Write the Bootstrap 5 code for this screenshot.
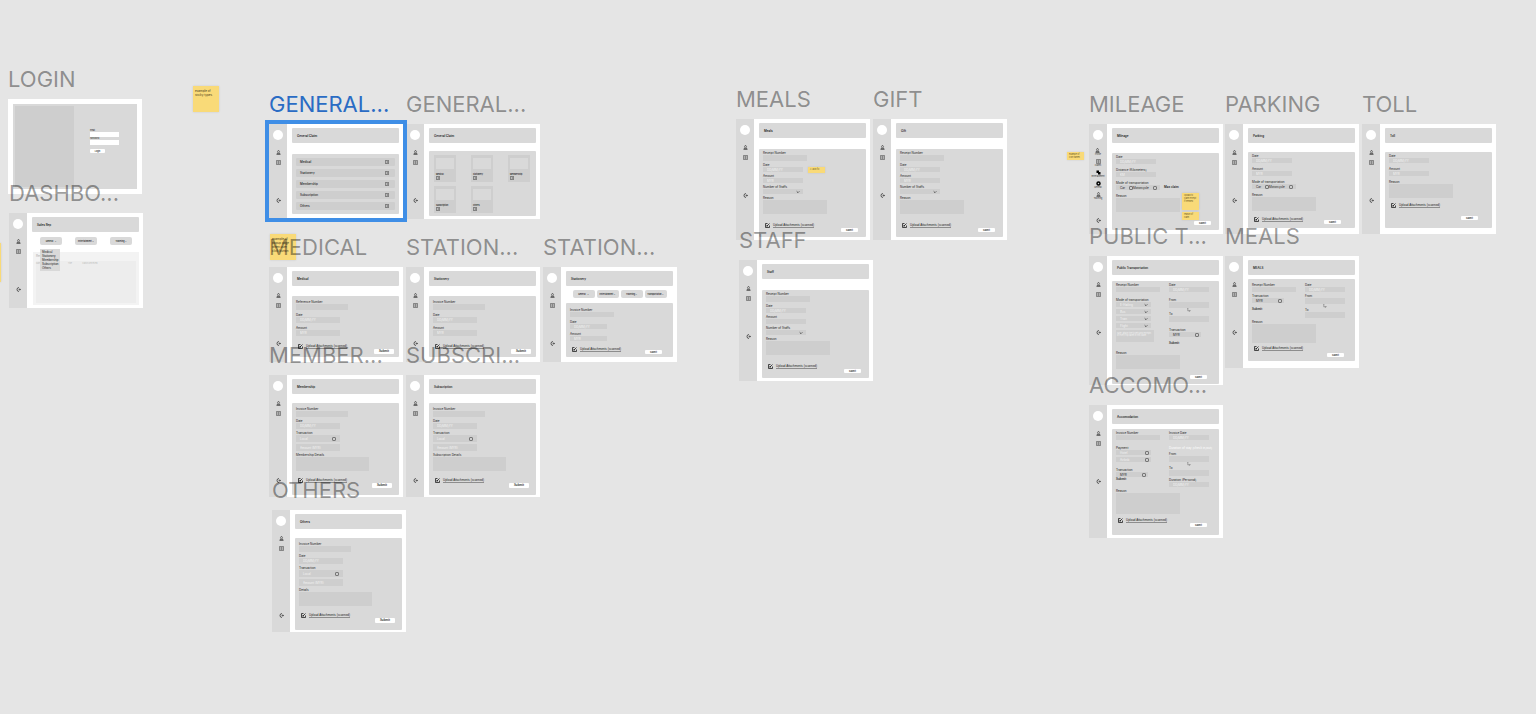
<!DOCTYPE html>
<html lang="en">
<head>
<meta charset="utf-8">
<meta name="viewport" content="width=device-width, initial-scale=1">
<title>Claims wireframes</title>
<link href="https://cdn.jsdelivr.net/npm/bootstrap@5.3.0/dist/css/bootstrap.min.css" rel="stylesheet">
<style>
  body { background: #e5e5e5; font-family: Inter, "Liberation Sans", sans-serif; color: #222; }
  .board { min-height: 100vh; font-size: 3px; line-height: 4px; }
  .artboard { width: 134px; left: var(--x); top: var(--y); }
  .board-name { height: 30px; margin: 0 0 5px; font-size: 22px; line-height: 30px; font-weight: 400; color: rgba(0,0,0,.4); white-space: nowrap; }
  .screen { background: #fff; min-height: var(--h, 95px); }
  .picked .board-name { color: #2a6cc4; }
  .picked .screen { outline: 4px solid #3f8ee6; }

  .side { width: 18px; background: #d9d9d9; padding-top: 6px; }
  .avatar { width: 10px; height: 10px; background: #fff; margin-bottom: 10px; }
  .side svg, .clip svg { width: 5px; height: 5px; display: block; }
  .side a { color: #333; }
  .side a + a { margin-top: 5px; }
  .side a.leave { margin-top: var(--leave, 33px); }
  .side-named .avatar { margin-bottom: 8px; }
  .side-named a { text-decoration: none; font-size: 2px; line-height: 3px; }
  .side-named a + a { margin-top: 3px; }
  .side-named a.leave { margin-top: 18px; }

  .pane { padding: 4px 4px var(--foot, 3px) 5px; min-width: 0; }
  .bar { height: 15px; padding-left: 5px; background: #d9d9d9; border-radius: 1px; font-size: 3px; line-height: 4px; font-weight: 600; margin: 0; }
  .sheet { background: #d9d9d9; border-radius: 1px; margin-top: var(--drop, 9px); padding: var(--top, 4px) 4px 0; }
  .stack { gap: var(--gap, 2px); }
  .gap-wide { gap: 6px; }
  .duo { gap: 9px; }
  .duo > div { width: 44px; }

  .fld { width: 44px; color: #222; }
  .fld input:not(.tick), .fld select, .fld textarea, .opts, .memo { border: 0; border-radius: 0; background-color: #cecece; color: #f2f2f2; font-size: 3px; line-height: 4px; padding: 0 4px; height: 5px; width: 100%; display: block; resize: none; outline: 0; }
  .fld input::placeholder { color: #f4f4f4; opacity: 1; }
  .fld select { appearance: none; background-image: url("data:image/svg+xml,%3Csvg xmlns='http://www.w3.org/2000/svg' viewBox='0 0 6 6'%3E%3Cpath d='M1 2l2 2 2-2' fill='none' stroke='%23222'/%3E%3C/svg%3E"); background-repeat: no-repeat; background-size: 4px 4px; background-position: right 3px center; }
  .fld input.h6px:not(.tick) { height: 6px; }
  .fld input.h7px:not(.tick), .opts.h7px { height: 7px; }
  .fld .area { height: 14px; }
  .w-52 { width: 52px; } .w-40 { width: 40px; } .w-37 { width: 37px; } .w-35 { width: 35px; }
  .w-64 { width: 64px; } .w-73 { width: 73px; } .w-32 { width: 32px; }
  .opts { width: 44px; color: #222; }
  .opts.w-32 { width: 32px; }
  .opts.pale { color: #f2f2f2; }
  .tick { appearance: none; flex: none; width: 4px; height: 4px; border: 1px solid #777; border-radius: 1px; margin: 0; display: block; }
  .opts.w-32, .opts.w-100 { padding-right: 2px; }
  .memo { width: 38px; height: 12px; padding: 2px 1px; font-size: 2px; line-height: 2px; }
  .strong { font-weight: 600; }
  .hop { width: 4px; height: 4px; margin-left: 18px; display: block; }

  .ending { height: var(--end, 11px); margin-top: auto; margin-bottom: var(--under, 5px); padding-right: var(--right, 4px); }
  .clip { gap: 3px; padding-left: 2px; height: 6px; color: #222; white-space: nowrap; text-decoration: none; font-family: "Liberation Sans", sans-serif; }
  .clip u { text-decoration-color: rgba(0,0,0,.35); }
  .send { border: 0; background: #fff; color: #222; font-weight: 600; font-size: 2px; line-height: 3px; width: 17px; height: 4px; padding: 0; border-radius: 1px; }
  .send-lg { width: 20px; height: 5px; font-size: 3px; }

  .row-link { height: 8px; background: #cecece; padding: 0 6px 0 4px; color: #222; text-decoration: none; font-weight: 500; border-radius: 1px; }
  .row-link svg, .tile svg { width: 4px; height: 4px; display: block; }
  .tiles { display: grid; grid-template-columns: repeat(3, 22px); justify-content: space-between; gap: 4px; padding: 0 2px 0 1px; }
  .tile { height: 27px; background: #cecece; padding: 3px 2px; font-size: 2px; line-height: 4px; color: #222; text-decoration: none; font-weight: 600; }
  .thumb { background: #d9d9d9; height: 11px; margin-bottom: 3px; }
  .pill { border: 0; width: 22px; height: 8px; background: #d9d9d9; border-radius: 2px; font-size: 2px; line-height: 3px; font-weight: 600; color: #222; padding: 0 2px; white-space: nowrap; }
  .pills { margin-top: 4px; gap: 2px; }

  .login-page { padding: 5px; height: 95px; }
  .login-box { background: #d9d9d9; padding: 2px; }
  .login-art { width: 59px; background: #cecece; margin-right: 16px; }
  .login-form { padding-top: 23px; }
  .login-form .fld { width: 29px; font-size: 2px; line-height: 3px; }
  .login-form .fld input:not(.tick) { background: #fff; color: #222; }
  .login-form .send { width: 15px; margin-top: 4px; }

  .dash-pills { padding: 5px 7px 0 8px; }
  .drop { top: 12px; left: 0; z-index: 2; width: 20px; background: #d9d9d9; padding: 1px 2px; font-size: 3px; line-height: 4px; text-align: left; font-family: "Liberation Sans", sans-serif; }
  .report { margin: 7px 0 0 1px; background: #f3f3f3; padding: 2px 3px; color: #aaa; }
  .report-body { background: #ededed; margin-top: 3px; font-size: 2px; line-height: 4px; }
  .report-body th { font-weight: 400; padding: 0; color: #bbb; }

  .note { left: var(--x); top: var(--y); width: 17px; height: 8px; background: #f9da78; color: #665620; font-size: 2px; line-height: 3px; padding: 1px 2px; box-shadow: 0 0 2px rgba(0,0,0,.12); overflow: hidden; white-space: nowrap; }
  .note-big { width: 26px; height: 26px; font-size: 3px; line-height: 4px; padding: 3px 2px; color: #44391a; }

  #login { --x: 8px; --y: 64px; }
  #dashboard { --x: 9px; --y: 178px; }
  #general-list { --x: 269px; --y: 89px; --h: 94px; --drop: 11px; --foot: 4px; }
  #general-grid { --x: 406px; --y: 89px; --drop: 8px; --foot: 3px; }
  #medical { --x: 269px; --y: 232px; }
  #stationary { --x: 406px; --y: 232px; }
  #medical, #stationary { --drop: 10px; --foot: 5px; --gap: 3px; --under: 3px; --right: 1px; }
  #stationary-form { --x: 543px; --y: 232px; --drop: 5px; --foot: 5px; --top: 5px; --gap: 3px; --end: 8px; --under: 3px; --right: 7px; }
  #membership { --x: 269px; --y: 340px; }
  #subscription { --x: 406px; --y: 340px; }
  #others { --x: 272px; --y: 475px; }
  #membership, #subscription, #others { --h: 122px; --foot: 2px; --leave: 62px; --under: 7px; --right: 3px; }
  #meals { --x: 736px; --y: 84px; }
  #gift { --x: 873px; --y: 84px; }
  #staff { --x: 739px; --y: 225px; }
  #meals, #gift, #staff { --h: 121px; --drop: 11px; --top: 2px; --end: 10px; }
  #mileage { --x: 1089px; --y: 89px; --h: 110px; --drop: 10px; --foot: 4px; --top: 2px; --gap: 4px; --end: 5px; }
  #parking { --x: 1225px; --y: 89px; --end: 8px; --under: 4px; }
  #toll { --x: 1362px; --y: 89px; --end: 18px; --under: 8px; }
  #parking, #toll { --h: 110px; --foot: 6px; --top: 2px; --gap: 4px; --right: 10px; }
  #public { --x: 1089px; --y: 221px; --h: 128px; --drop: 6px; --foot: 1px; --top: 2px; --under: 5px; --right: 8px; --end: 4px; }
  #meals-travel { --x: 1225px; --y: 221px; --h: 112px; --drop: 4px; --foot: 7px; --top: 4px; --end: 12px; --under: 4px; --right: 7px; }
  #accommodation { --x: 1089px; --y: 370px; --h: 133px; --drop: 5px; --foot: 3px; --top: 2px; --end: 10px; --under: 8px; --right: 8px; }
  #accommodation .area { height: 21px; }
  #meals-travel .area { height: 19px; }
</style>
</head>
<body>
<svg class="d-none" xmlns="http://www.w3.org/2000/svg">
  <symbol id="i-user" viewBox="0 0 10 10"><path d="M5 1a2 2 0 0 1 1 3.600L8 7H2l2-2.400A2 2 0 0 1 5 1zM1 9h8" fill="none" stroke="currentColor" stroke-width="1.300"/></symbol>
  <symbol id="i-list" viewBox="0 0 10 10"><path d="M1 1h8v8H1zM3 3h4M3 5h4M3 7h4" fill="none" stroke="currentColor" stroke-width="1"/></symbol>
  <symbol id="i-leave" viewBox="0 0 10 10"><path d="M6 1a4 4 0 1 0 0 8" fill="none" stroke="currentColor" stroke-width="1.500"/><path d="M5 4.300h2V2.500L10 5 7 7.500V5.700H5z" fill="currentColor"/></symbol>
  <symbol id="i-edit" viewBox="0 0 10 10"><path d="M5 1H1v8h8V5M4 6l5-5M3.500 6.500l.5-2 1.500 1.500z" fill="none" stroke="currentColor" stroke-width="1.600"/></symbol>
  <symbol id="i-go" viewBox="0 0 10 10"><path d="M1 1h8v8H1zM4 3l3 2-3 2" fill="none" stroke="currentColor" stroke-width="1.200"/></symbol>
  <symbol id="i-hop" viewBox="0 0 10 10"><path d="M2 1v6h6M6 5l2 2-2 2M1 2l1-1 1 1" fill="none" stroke="#444" stroke-width="1"/></symbol>
  <symbol id="i-copy" viewBox="0 0 10 10"><path d="M1 1h5v3h3v5H4V6H1z" fill="#000"/></symbol>
  <symbol id="i-gear" viewBox="0 0 10 10"><circle cx="5" cy="5" r="3" fill="none" stroke="#000" stroke-width="3"/></symbol>
</svg>

<template id="side-template">
  <div class="avatar rounded-circle"></div>
  <a href="#" aria-label="Profile"><svg><use href="#i-user"/></svg></a>
  <a href="#" aria-label="Claims"><svg><use href="#i-list"/></svg></a>
  <a href="#" class="leave" aria-label="Log out"><svg><use href="#i-leave"/></svg></a>
</template>
<template id="clip-template"><svg><use href="#i-edit"/></svg><u>Upload Attachments (scanned)</u></template>

<main class="board position-relative overflow-hidden">

  <section class="artboard position-absolute" id="login">
    <h2 class="board-name">LOGIN</h2>
    <div class="screen login-page">
      <div class="login-box d-flex h-100">
        <div class="login-art"></div>
        <form class="login-form">
          <label class="fld d-block">Email<input type="text"></label>
          <label class="fld d-block">Password<input type="password"></label>
          <button type="button" class="send d-block">Login</button>
        </form>
      </div>
    </div>
  </section>

  <section class="artboard position-absolute" id="dashboard">
    <h2 class="board-name">DASHBO...</h2>
    <div class="screen d-flex">
      <nav class="side d-flex flex-column align-items-center flex-shrink-0"></nav>
      <div class="pane flex-grow-1 d-flex flex-column">
        <h3 class="bar d-flex align-items-center">Sales Rep</h3>
        <div class="dash-pills d-flex justify-content-between">
          <div class="position-relative d-flex"><button class="pill" type="button">General &nbsp; ⌄</button>
            <div class="drop position-absolute">Medical<br>Stationery<br>Membership<br>Subscription<br>Others</div>
          </div>
          <button class="pill" type="button">Entertainment ⌄</button>
          <button class="pill" type="button">Traveling ⌄</button>
        </div>
        <div class="report flex-grow-1 d-flex flex-column">Recent
          <div class="report-body flex-grow-1"><table class="w-100"><tr><th>Date</th><th>Type</th><th>Title</th><th>Status Received</th></tr></table></div>
        </div>
      </div>
    </div>
  </section>

  <aside class="note note-big position-absolute" style="--x:193px;--y:86px">example of<br>sticky types</aside>
  <aside class="note position-absolute" style="--x:-16px;--y:243px;height:39px"></aside>

  <section class="artboard position-absolute" id="general-grid">
    <h2 class="board-name">GENERAL...</h2>
    <div class="screen d-flex">
      <nav class="side d-flex flex-column align-items-center flex-shrink-0"></nav>
      <div class="pane flex-grow-1 d-flex flex-column">
        <h3 class="bar d-flex align-items-center">General Claim</h3>
        <div class="sheet flex-grow-1"><div class="tiles">
          <a class="tile" href="#"><div class="thumb"></div>Medical<svg><use href="#i-go"/></svg></a>
          <a class="tile" href="#"><div class="thumb"></div>Stationery<svg><use href="#i-go"/></svg></a>
          <a class="tile" href="#"><div class="thumb"></div>Membership<svg><use href="#i-go"/></svg></a>
          <a class="tile" href="#"><div class="thumb"></div>Subscription<svg><use href="#i-go"/></svg></a>
          <a class="tile" href="#"><div class="thumb"></div>Others<svg><use href="#i-go"/></svg></a>
        </div></div>
      </div>
    </div>
  </section>

  <section class="artboard position-absolute picked" id="general-list">
    <h2 class="board-name">GENERAL...</h2>
    <div class="screen d-flex">
      <nav class="side d-flex flex-column align-items-center flex-shrink-0"></nav>
      <div class="pane flex-grow-1 d-flex flex-column">
        <h3 class="bar d-flex align-items-center">General Claim</h3>
        <div class="sheet flex-grow-1 d-flex flex-column justify-content-between pb-1">
          <a class="row-link d-flex align-items-center justify-content-between" href="#">Medical<svg><use href="#i-go"/></svg></a>
          <a class="row-link d-flex align-items-center justify-content-between" href="#">Stationery<svg><use href="#i-go"/></svg></a>
          <a class="row-link d-flex align-items-center justify-content-between" href="#">Membership<svg><use href="#i-go"/></svg></a>
          <a class="row-link d-flex align-items-center justify-content-between" href="#">Subscription<svg><use href="#i-go"/></svg></a>
          <a class="row-link d-flex align-items-center justify-content-between" href="#">Others<svg><use href="#i-go"/></svg></a>
        </div>
      </div>
    </div>
  </section>

  <aside class="note note-big position-absolute" style="--x:270px;--y:234px">example of<br>popup page<br>when user<br>click button</aside>

  <section class="artboard position-absolute" id="medical">
    <h2 class="board-name">MEDICAL</h2>
    <div class="screen d-flex">
      <nav class="side d-flex flex-column align-items-center flex-shrink-0"></nav>
      <div class="pane flex-grow-1 d-flex flex-column">
        <h3 class="bar d-flex align-items-center">Medical</h3>
        <form class="sheet stack flex-grow-1 d-flex flex-column">
          <label class="fld w-52">Reference Number<input class="h6px"></label>
          <label class="fld">Date<input class="h6px" placeholder="DD/MM/YY"></label>
          <label class="fld">Amount<input class="h6px" placeholder="MYR"></label>
          <div class="ending d-flex justify-content-between"><a href="#" class="clip d-flex align-items-center"></a><button type="button" class="send send-lg align-self-end">Submit</button></div>
        </form>
      </div>
    </div>
  </section>

  <section class="artboard position-absolute" id="stationary">
    <h2 class="board-name">STATION...</h2>
    <div class="screen d-flex">
      <nav class="side d-flex flex-column align-items-center flex-shrink-0"></nav>
      <div class="pane flex-grow-1 d-flex flex-column">
        <h3 class="bar d-flex align-items-center">Stationery</h3>
        <form class="sheet stack flex-grow-1 d-flex flex-column">
          <label class="fld w-52">Invoice Number<input class="h6px"></label>
          <label class="fld">Date<input class="h6px" placeholder="DD/MM/YY"></label>
          <label class="fld">Amount<input class="h6px" placeholder="MYR"></label>
          <div class="ending d-flex justify-content-between"><a href="#" class="clip d-flex align-items-center"></a><button type="button" class="send send-lg align-self-end">Submit</button></div>
        </form>
      </div>
    </div>
  </section>

  <section class="artboard position-absolute" id="stationary-form">
    <h2 class="board-name">STATION...</h2>
    <div class="screen d-flex">
      <nav class="side d-flex flex-column align-items-center flex-shrink-0"></nav>
      <div class="pane flex-grow-1 d-flex flex-column">
        <h3 class="bar d-flex align-items-center">Stationery</h3>
        <div class="pills d-flex justify-content-center">
          <button class="pill" type="button">General &nbsp; ⌄</button>
          <button class="pill" type="button">Entertainment ⌄</button>
          <button class="pill" type="button">Traveling ⌄</button>
          <button class="pill" type="button">Transportation ⌄</button>
        </div>
        <form class="sheet stack flex-grow-1 d-flex flex-column">
          <label class="fld">Invoice Number<input></label>
          <label class="fld w-37">Date<input placeholder="DD/MM/YY"></label>
          <label class="fld w-37">Amount<input placeholder="MYR"></label>
          <div class="ending d-flex justify-content-between"><a href="#" class="clip d-flex align-items-center"></a><button type="button" class="send align-self-end">Submit</button></div>
        </form>
      </div>
    </div>
  </section>

  <section class="artboard position-absolute" id="membership">
    <h2 class="board-name">MEMBER...</h2>
    <div class="screen d-flex">
      <nav class="side d-flex flex-column align-items-center flex-shrink-0"></nav>
      <div class="pane flex-grow-1 d-flex flex-column">
        <h3 class="bar d-flex align-items-center">Membership</h3>
        <form class="sheet stack flex-grow-1 d-flex flex-column">
          <label class="fld w-52">Invoice Number<input class="h6px"></label>
          <label class="fld">Date<input class="h6px" placeholder="DD/MM/YY"></label>
          <label class="fld">Transaction<span class="opts pale h7px d-flex align-items-center justify-content-between">Local<input type="checkbox" class="tick"></span></label>
          <label class="fld"><input class="h7px" aria-label="Amount" placeholder="Amount (MYR)"></label>
          <label class="fld w-73">Membership Details<textarea class="area"></textarea></label>
          <div class="ending d-flex justify-content-between"><a href="#" class="clip d-flex align-items-center"></a><button type="button" class="send send-lg align-self-end">Submit</button></div>
        </form>
      </div>
    </div>
  </section>

  <section class="artboard position-absolute" id="subscription">
    <h2 class="board-name">SUBSCRI...</h2>
    <div class="screen d-flex">
      <nav class="side d-flex flex-column align-items-center flex-shrink-0"></nav>
      <div class="pane flex-grow-1 d-flex flex-column">
        <h3 class="bar d-flex align-items-center">Subscription</h3>
        <form class="sheet stack flex-grow-1 d-flex flex-column">
          <label class="fld w-52">Invoice Number<input class="h6px"></label>
          <label class="fld">Date<input class="h6px" placeholder="DD/MM/YY"></label>
          <label class="fld">Transaction<span class="opts pale h7px d-flex align-items-center justify-content-between">Local<input type="checkbox" class="tick"></span></label>
          <label class="fld"><input class="h7px" aria-label="Amount" placeholder="Amount (MYR)"></label>
          <label class="fld w-73">Subscription Details<textarea class="area"></textarea></label>
          <div class="ending d-flex justify-content-between"><a href="#" class="clip d-flex align-items-center"></a><button type="button" class="send send-lg align-self-end">Submit</button></div>
        </form>
      </div>
    </div>
  </section>

  <section class="artboard position-absolute" id="others">
    <h2 class="board-name">OTHERS</h2>
    <div class="screen d-flex">
      <nav class="side d-flex flex-column align-items-center flex-shrink-0"></nav>
      <div class="pane flex-grow-1 d-flex flex-column">
        <h3 class="bar d-flex align-items-center">Others</h3>
        <form class="sheet stack flex-grow-1 d-flex flex-column">
          <label class="fld w-52">Invoice Number<input class="h6px"></label>
          <label class="fld">Date<input class="h6px" placeholder="DD/MM/YY"></label>
          <label class="fld">Transaction<span class="opts pale h7px d-flex align-items-center justify-content-between">Local<input type="checkbox" class="tick"></span></label>
          <label class="fld"><input class="h7px" aria-label="Amount" placeholder="Amount (MYR)"></label>
          <label class="fld w-73">Details<textarea class="area"></textarea></label>
          <div class="ending d-flex justify-content-between"><a href="#" class="clip d-flex align-items-center"></a><button type="button" class="send send-lg align-self-end">Submit</button></div>
        </form>
      </div>
    </div>
  </section>

  <section class="artboard position-absolute" id="meals">
    <h2 class="board-name">MEALS</h2>
    <div class="screen d-flex">
      <nav class="side d-flex flex-column align-items-center flex-shrink-0"></nav>
      <div class="pane flex-grow-1 d-flex flex-column">
        <h3 class="bar d-flex align-items-center">Meals</h3>
        <form class="sheet stack flex-grow-1 d-flex flex-column">
          <label class="fld">Receipt Number<input class="h6px"></label>
          <label class="fld w-40">Date<input placeholder="DD/MM/YY"></label>
          <label class="fld w-40">Amount<input placeholder="MYR"></label>
          <label class="fld w-40">Number of Staffs<select><option></option></select></label>
          <label class="fld w-64">Reason<textarea class="area"></textarea></label>
          <div class="ending d-flex justify-content-between"><a href="#" class="clip d-flex align-items-center"></a><button type="button" class="send align-self-end">Submit</button></div>
        </form>
      </div>
    </div>
  </section>
  <aside class="note position-absolute" style="--x:808px;--y:167px;height:6px">▷ auto fill</aside>

  <section class="artboard position-absolute" id="gift">
    <h2 class="board-name">GIFT</h2>
    <div class="screen d-flex">
      <nav class="side d-flex flex-column align-items-center flex-shrink-0"></nav>
      <div class="pane flex-grow-1 d-flex flex-column">
        <h3 class="bar d-flex align-items-center">Gift</h3>
        <form class="sheet stack flex-grow-1 d-flex flex-column">
          <label class="fld">Receipt Number<input class="h6px"></label>
          <label class="fld w-40">Date<input placeholder="DD/MM/YY"></label>
          <label class="fld w-40">Amount<input placeholder="MYR"></label>
          <label class="fld w-40">Number of Staffs<select><option></option></select></label>
          <label class="fld w-64">Reason<textarea class="area"></textarea></label>
          <div class="ending d-flex justify-content-between"><a href="#" class="clip d-flex align-items-center"></a><button type="button" class="send align-self-end">Submit</button></div>
        </form>
      </div>
    </div>
  </section>

  <section class="artboard position-absolute" id="staff">
    <h2 class="board-name">STAFF</h2>
    <div class="screen d-flex">
      <nav class="side d-flex flex-column align-items-center flex-shrink-0"></nav>
      <div class="pane flex-grow-1 d-flex flex-column">
        <h3 class="bar d-flex align-items-center">Staff</h3>
        <form class="sheet stack flex-grow-1 d-flex flex-column">
          <label class="fld">Receipt Number<input class="h6px"></label>
          <label class="fld w-40">Date<input placeholder="DD/MM/YY"></label>
          <label class="fld w-40">Amount<input></label>
          <label class="fld w-40">Number of Staffs<select><option></option></select></label>
          <label class="fld w-64">Reason<textarea class="area"></textarea></label>
          <div class="ending d-flex justify-content-between"><a href="#" class="clip d-flex align-items-center"></a><button type="button" class="send align-self-end">Submit</button></div>
        </form>
      </div>
    </div>
  </section>

  <section class="artboard position-absolute" id="mileage">
    <h2 class="board-name">MILEAGE</h2>
    <div class="screen d-flex">
      <nav class="side side-named d-flex flex-column align-items-center flex-shrink-0">
        <div class="avatar rounded-circle"></div>
        <a href="#" class="d-flex flex-column align-items-center"><svg><use href="#i-user"/></svg>Profile</a>
        <a href="#" class="d-flex flex-column align-items-center"><svg><use href="#i-list"/></svg>Claims</a>
        <a href="#" class="d-flex flex-column align-items-center"><svg><use href="#i-copy"/></svg>Entertainment</a>
        <a href="#" class="d-flex flex-column align-items-center"><svg><use href="#i-gear"/></svg>General</a>
        <a href="#" class="d-flex flex-column align-items-center"><svg><use href="#i-user"/></svg>Traveling</a>
        <a href="#" class="leave" aria-label="Log out"><svg><use href="#i-leave"/></svg></a>
      </nav>
      <div class="pane flex-grow-1 d-flex flex-column">
        <h3 class="bar d-flex align-items-center">Mileage</h3>
        <form class="sheet stack flex-grow-1 d-flex flex-column">
          <label class="fld w-40">Date<input placeholder="DD/MM/YY"></label>
          <label class="fld w-40">Distance (Kilometers)<input placeholder="KM"></label>
          <div class="fld">Mode of transportation
            <div class="d-flex text-nowrap"><div class="opts flex-shrink-0 d-flex align-items-center justify-content-between"><label class="d-flex gap-1">Car<input type="checkbox" class="tick"></label><label class="d-flex gap-1">Motorcycle<input type="checkbox" class="tick"></label></div><span class="strong ps-1">Max claim</span></div></div>
          <label class="fld w-64">Reason<textarea class="area"></textarea></label>
          <div class="ending d-flex justify-content-end"><button type="button" class="send align-self-end">Submit</button></div>
        </form>
      </div>
    </div>
  </section>
  <aside class="note position-absolute" style="--x:1182px;--y:193px;height:17px">upload to<br>claim receipt<br>if needed</aside>
  <aside class="note position-absolute" style="--x:1182px;--y:212px">reason of<br>claim</aside>
  <aside class="note position-absolute" style="--x:1067px;--y:152px">example of<br>icon names</aside>

  <section class="artboard position-absolute" id="parking">
    <h2 class="board-name">PARKING</h2>
    <div class="screen d-flex">
      <nav class="side d-flex flex-column align-items-center flex-shrink-0"></nav>
      <div class="pane flex-grow-1 d-flex flex-column">
        <h3 class="bar d-flex align-items-center">Parking</h3>
        <form class="sheet stack flex-grow-1 d-flex flex-column">
          <label class="fld w-40">Date<input placeholder="DD/MM/YY"></label>
          <label class="fld w-40">Amount<input placeholder="MYR"></label>
          <div class="fld">Mode of transportation
            <div class="opts d-flex align-items-center justify-content-between"><label class="d-flex gap-1">Car<input type="checkbox" class="tick"></label><label class="d-flex gap-1">Motorcycle<input type="checkbox" class="tick"></label></div></div>
          <label class="fld w-64">Reason<textarea class="area"></textarea></label>
          <div class="ending d-flex justify-content-between"><a href="#" class="clip d-flex align-items-center"></a><button type="button" class="send align-self-end">Submit</button></div>
        </form>
      </div>
    </div>
  </section>

  <section class="artboard position-absolute" id="toll">
    <h2 class="board-name">TOLL</h2>
    <div class="screen d-flex">
      <nav class="side d-flex flex-column align-items-center flex-shrink-0"></nav>
      <div class="pane flex-grow-1 d-flex flex-column">
        <h3 class="bar d-flex align-items-center">Toll</h3>
        <form class="sheet stack flex-grow-1 d-flex flex-column">
          <label class="fld w-40">Date<input placeholder="DD/MM/YY"></label>
          <label class="fld w-40">Amount<input placeholder="MYR"></label>
          <label class="fld w-64">Reason<textarea class="area"></textarea></label>
          <div class="ending d-flex justify-content-between"><a href="#" class="clip d-flex align-items-center"></a><button type="button" class="send align-self-end">Submit</button></div>
        </form>
      </div>
    </div>
  </section>

  <section class="artboard position-absolute" id="public">
    <h2 class="board-name">PUBLIC T...</h2>
    <div class="screen d-flex">
      <nav class="side d-flex flex-column align-items-center flex-shrink-0"></nav>
      <div class="pane flex-grow-1 d-flex flex-column">
        <h3 class="bar d-flex align-items-center">Public Transportation</h3>
        <form class="sheet gap-wide flex-grow-1 d-flex flex-column">
          <div class="duo d-flex">
            <div class="gap-wide d-flex flex-column">
              <label class="fld">Receipt Number<input></label>
              <div class="stack d-flex flex-column">
                <label class="fld w-35 text-nowrap">Mode of transportation<select><option>E-Hailing</option></select></label>
                <label class="fld w-35"><select aria-label="Bus"><option>Bus</option></select></label>
                <label class="fld w-35"><select aria-label="Train"><option>Train</option></select></label>
                <label class="fld w-35"><select aria-label="Flight"><option>Flight</option></select></label>
                <div class="memo">Note: attach the tickets and receipts of every trip taken in this claim</div>
              </div>
            </div>
            <div class="gap-wide d-flex flex-column">
              <label class="fld w-40">Date<input placeholder="DD/MM/YY"></label>
              <div><label class="fld d-block w-40">From<input class="h6px"></label>
              <svg class="hop"><use href="#i-hop"/></svg>
              <label class="fld d-block w-40">To<input class="h6px"></label></div>
              <div class="fld w-32">Transaction<label class="opts w-32 d-flex align-items-center justify-content-between">MYR<input type="checkbox" class="tick"></label><div class="strong pt-1">Submit</div></div>
            </div>
          </div>
          <label class="fld w-64">Reason<textarea class="area"></textarea></label>
          <div class="ending d-flex justify-content-end"><button type="button" class="send align-self-end">Submit</button></div>
        </form>
      </div>
    </div>
  </section>

  <section class="artboard position-absolute" id="meals-travel">
    <h2 class="board-name">MEALS</h2>
    <div class="screen d-flex">
      <nav class="side d-flex flex-column align-items-center flex-shrink-0"></nav>
      <div class="pane flex-grow-1 d-flex flex-column">
        <h3 class="bar d-flex align-items-center">MEALS</h3>
        <form class="sheet stack flex-grow-1 d-flex flex-column">
          <div class="duo d-flex">
            <div class="stack d-flex flex-column">
              <label class="fld">Receipt Number<input></label>
              <div class="fld w-32">Transaction<label class="opts w-32 d-flex align-items-center justify-content-between">MYR<input type="checkbox" class="tick"></label><div class="strong pt-1">Submit</div></div>
            </div>
            <div class="stack d-flex flex-column">
              <label class="fld w-40">Date<input placeholder="DD/MM/YY"></label>
              <div><label class="fld d-block w-40">From<input class="h6px"></label>
              <svg class="hop"><use href="#i-hop"/></svg>
              <label class="fld d-block w-40">To<input class="h6px"></label></div>
            </div>
          </div>
          <label class="fld w-64">Reason<textarea class="area"></textarea></label>
          <div class="ending d-flex justify-content-between"><a href="#" class="clip d-flex align-items-center"></a><button type="button" class="send align-self-end">Submit</button></div>
        </form>
      </div>
    </div>
  </section>

  <section class="artboard position-absolute" id="accommodation">
    <h2 class="board-name">ACCOMO...</h2>
    <div class="screen d-flex">
      <nav class="side d-flex flex-column align-items-center flex-shrink-0"></nav>
      <div class="pane flex-grow-1 d-flex flex-column">
        <h3 class="bar d-flex align-items-center">Accomodation</h3>
        <form class="sheet stack flex-grow-1 d-flex flex-column">
          <div class="duo d-flex">
            <div class="gap-wide d-flex flex-column">
              <label class="fld">Invoice Number<input></label>
              <div class="stack d-flex flex-column">
                <label class="fld w-35">Payment<span class="opts pale w-100 d-flex align-items-center justify-content-between">Hotel<input type="checkbox" class="tick"></span></label>
                <label class="fld w-35"><span class="opts pale w-100 d-flex align-items-center justify-content-between">Airbnb<input type="checkbox" class="tick"></span></label>
              </div>
              <div class="fld w-32">Transaction<label class="opts w-32 d-flex align-items-center justify-content-between">MYR<input type="checkbox" class="tick"></label><div class="strong">Submit</div></div>
            </div>
            <div class="stack d-flex flex-column">
              <label class="fld w-40">Invoice Date<input placeholder="DD/MM/YY"></label>
              <div class="text-white text-nowrap pt-1">Duration of stay (check in/out)</div>
              <div><label class="fld d-block w-40">From<input class="h6px"></label>
              <svg class="hop"><use href="#i-hop"/></svg>
              <label class="fld d-block w-40">To<input class="h6px"></label></div>
              <label class="fld w-40">Duration (Personal)<input placeholder="DD/MM/YY"></label>
            </div>
          </div>
          <label class="fld w-64">Reason<textarea class="area"></textarea></label>
          <div class="ending d-flex justify-content-between"><a href="#" class="clip d-flex align-items-center"></a><button type="button" class="send align-self-end">Submit</button></div>
        </form>
      </div>
    </div>
  </section>
</main>

<script src="https://cdn.jsdelivr.net/npm/bootstrap@5.3.0/dist/js/bootstrap.bundle.min.js"></script>
<script>
  // Every screen shares the same sidebar and attachment link.
  const fill = (selector, id) => document.querySelectorAll(selector).forEach(el =>
    el.append(document.getElementById(id).content.cloneNode(true)));
  fill('.side:not(.side-named)', 'side-template');
  fill('.clip', 'clip-template');
</script>
</body>
</html>
